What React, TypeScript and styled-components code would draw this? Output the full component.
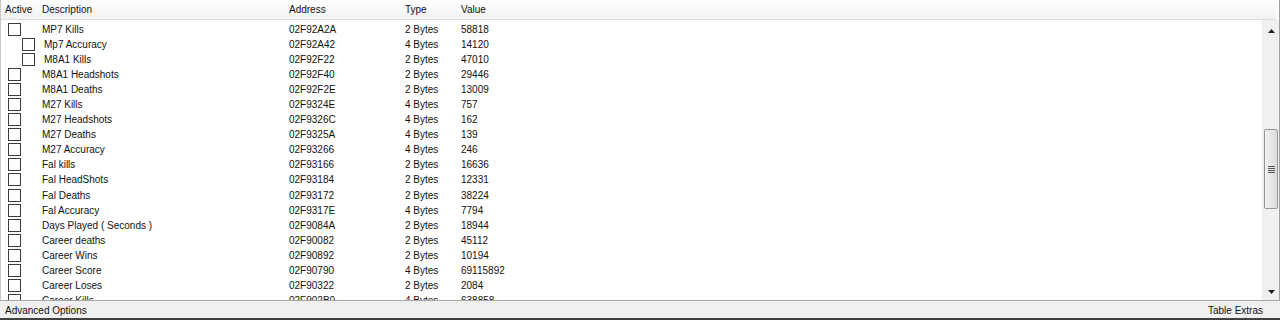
import React from "react";
import styled, { createGlobalStyle } from "styled-components";

const GlobalStyle = createGlobalStyle`
  html, body {
    margin: 0;
    padding: 0;
    background: #ffffff;
    overflow: hidden;
  }
  body {
    font-family: "Liberation Sans", Arial, sans-serif;
    font-size: 10px;
    color: #111;
  }
`;

interface Entry {
  desc: string;
  address: string;
  type: string;
  value: string;
  child?: boolean;
}

const entries: Entry[] = [
  { desc: "MP7 Kills", address: "02F92A2A", type: "2 Bytes", value: "58818" },
  { desc: "Mp7 Accuracy", address: "02F92A42", type: "4 Bytes", value: "14120", child: true },
  { desc: "M8A1 Kills", address: "02F92F22", type: "2 Bytes", value: "47010", child: true },
  { desc: "M8A1 Headshots", address: "02F92F40", type: "2 Bytes", value: "29446" },
  { desc: "M8A1 Deaths", address: "02F92F2E", type: "2 Bytes", value: "13009" },
  { desc: "M27 Kills", address: "02F9324E", type: "4 Bytes", value: "757" },
  { desc: "M27 Headshots", address: "02F9326C", type: "4 Bytes", value: "162" },
  { desc: "M27 Deaths", address: "02F9325A", type: "4 Bytes", value: "139" },
  { desc: "M27 Accuracy", address: "02F93266", type: "4 Bytes", value: "246" },
  { desc: "Fal kills", address: "02F93166", type: "2 Bytes", value: "16636" },
  { desc: "Fal HeadShots", address: "02F93184", type: "2 Bytes", value: "12331" },
  { desc: "Fal Deaths", address: "02F93172", type: "2 Bytes", value: "38224" },
  { desc: "Fal Accuracy", address: "02F9317E", type: "4 Bytes", value: "7794" },
  { desc: "Days Played ( Seconds )", address: "02F9084A", type: "2 Bytes", value: "18944" },
  { desc: "Career deaths", address: "02F90082", type: "2 Bytes", value: "45112" },
  { desc: "Career Wins", address: "02F90892", type: "2 Bytes", value: "10194" },
  { desc: "Career Score", address: "02F90790", type: "4 Bytes", value: "69115892" },
  { desc: "Career Loses", address: "02F90322", type: "2 Bytes", value: "2084" },
  { desc: "Career Kills", address: "02F902B0", type: "4 Bytes", value: "638858" },
];

const Window = styled.div`
  width: 1280px;
  height: 320px;
  display: flex;
  flex-direction: column;
  overflow: hidden;
`;

const Frame = styled.div`
  flex: 1;
  min-height: 0;
  display: flex;
  flex-direction: column;
  border-right: 1px solid #a0a0a0;
  border-left: 1px solid #c8c8c8;
`;

const Header = styled.div`
  height: 19px;
  display: flex;
  align-items: center;
  background: linear-gradient(#ffffff, #f7f8fa 50%, #f1f2f4);
  border-bottom: 1px solid #d8dbe0;
  margin-right: 3px;
`;

const HeadCell = styled.div<{ $w?: number }>`
  width: ${(p) => (p.$w ? `${p.$w}px` : "auto")};
  flex: ${(p) => (p.$w ? "none" : "1")};
  padding-left: 4px;
  box-sizing: border-box;
  white-space: nowrap;
`;

const Body = styled.div`
  flex: 1;
  min-height: 0;
  display: flex;
`;

const List = styled.div`
  flex: 1;
  padding-top: 2px;
  overflow: hidden;
`;

const Row = styled.div`
  height: 15.05px;
  display: flex;
  align-items: center;
  white-space: nowrap;
`;

const ActiveCell = styled.div<{ $child?: boolean }>`
  width: 37px;
  flex: none;
  display: flex;
  align-items: center;
  padding-left: ${(p) => (p.$child ? 21 : 7)}px;
  box-sizing: border-box;
`;

const Check = styled.span`
  width: 11px;
  height: 11px;
  border: 1px solid #3c3c3c;
  background: #fff;
  flex: none;
`;

const Cell = styled.div<{ $w?: number; $pad?: number }>`
  width: ${(p) => (p.$w ? `${p.$w}px` : "auto")};
  flex: ${(p) => (p.$w ? "none" : "1")};
  padding-left: ${(p) => p.$pad ?? 4}px;
  box-sizing: border-box;
  overflow: hidden;
`;

const ScrollBar = styled.div`
  width: 17px;
  flex: none;
  display: flex;
  flex-direction: column;
  background: #f0f0f0;
  border-left: 1px solid #e8e8e8;
  box-sizing: border-box;
  padding-top: 2px;
`;

const ArrowButton = styled.div`
  height: 17px;
  flex: none;
  display: flex;
  align-items: center;
  justify-content: center;
`;

const Track = styled.div`
  flex: 1;
  display: flex;
  flex-direction: column;
  padding-top: 90px;
  padding-bottom: 74px;
`;

const Thumb = styled.div`
  flex: 1;
  margin: 0 1px;
  border: 1px solid #959595;
  border-radius: 2px;
  background: linear-gradient(90deg, #f2f2f2, #e6e6e6 50%, #dcdcdc);
  display: flex;
  align-items: center;
  justify-content: center;
`;

const Grip = styled.div`
  width: 7px;
  display: flex;
  flex-direction: column;
  gap: 1px;
  span {
    height: 1px;
    background: #555;
  }
`;

const StatusBar = styled.div`
  height: 18px;
  flex: none;
  display: flex;
  align-items: center;
  justify-content: space-between;
  background: #f0f0f0;
  border-top: 1px solid #a7a7a7;
  padding: 1px 17px 0 5px;
  box-sizing: border-box;
`;

const StatusText = styled.span`
  color: #111;
`;

const BottomEdge = styled.div`
  height: 2px;
  flex: none;
  background: #404040;
`;

export default function App() {
  return (
    <>
      <GlobalStyle />
      <Window>
        <Frame>
          <Header>
            <HeadCell $w={37}>Active</HeadCell>
            <HeadCell $w={247}>Description</HeadCell>
            <HeadCell $w={116}>Address</HeadCell>
            <HeadCell $w={56}>Type</HeadCell>
            <HeadCell>Value</HeadCell>
          </Header>
          <Body>
            <List>
              {entries.map((e) => (
                <Row key={e.address}>
                  <ActiveCell $child={e.child}>
                    <Check />
                  </ActiveCell>
                  <Cell $w={247} $pad={e.child ? 6 : 4}>
                    {e.desc}
                  </Cell>
                  <Cell $w={116}>{e.address}</Cell>
                  <Cell $w={56}>{e.type}</Cell>
                  <Cell>{e.value}</Cell>
                </Row>
              ))}
            </List>
            <ScrollBar>
              <ArrowButton>
                <svg width="7" height="4" viewBox="0 0 7 4">
                  <path d="M0 4 L3.5 0 L7 4 Z" fill="#222" />
                </svg>
              </ArrowButton>
              <Track>
                <Thumb>
                  <Grip>
                    <span />
                    <span />
                    <span />
                    <span />
                  </Grip>
                </Thumb>
              </Track>
              <ArrowButton>
                <svg width="7" height="4" viewBox="0 0 7 4">
                  <path d="M0 0 L7 0 L3.5 4 Z" fill="#222" />
                </svg>
              </ArrowButton>
            </ScrollBar>
          </Body>
        </Frame>
        <StatusBar>
          <StatusText>Advanced Options</StatusText>
          <StatusText>Table Extras</StatusText>
        </StatusBar>
        <BottomEdge />
      </Window>
    </>
  );
}
